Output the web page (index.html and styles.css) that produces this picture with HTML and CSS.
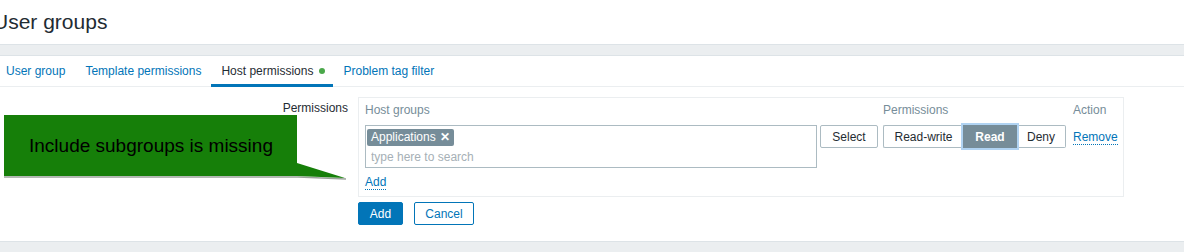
FILE: index.html
```html
<!DOCTYPE html>
<html lang="en">
<head>
    <meta charset="UTF-8">
    <title>User groups</title>
    <link rel="stylesheet" href="styles.css">
</head>
<body>
    <header class="page-header">
        <h1 class="page-title">User groups</h1>
    </header>
    <div class="separator"></div>

    <main class="page">
        <ul class="tabs">
            <li class="tab"><a href="#">User group</a></li>
            <li class="tab"><a href="#">Template permissions</a></li>
            <li class="tab active"><a href="#">Host permissions</a><span class="status-dot"></span></li>
            <li class="tab"><a href="#">Problem tag filter</a></li>
        </ul>

        <div class="form-row">
            <label class="form-label">Permissions</label>
            <div class="form-box">
                <div class="perm-grid">
                    <div class="col-title">Host groups</div>
                    <div></div>
                    <div class="col-title">Permissions</div>
                    <div class="col-title">Action</div>

                    <div class="multiselect">
                        <div class="tag-list">
                            <span class="tag">Applications <span class="tag-x">&#x2715;</span></span>
                        </div>
                        <input class="ms-input" type="text" placeholder="type here to search">
                    </div>
                    <div><button class="btn-alt">Select</button></div>
                    <div class="radio-seg">
                        <span class="seg">Read-write</span>
                        <span class="seg selected">Read</span>
                        <span class="seg">Deny</span>
                    </div>
                    <div><a href="#" class="link-action remove">Remove</a></div>
                </div>
                <a href="#" class="link-action add-link">Add</a>
            </div>
        </div>

        <div class="form-buttons">
            <button class="btn-primary">Add</button>
            <button class="btn-outline">Cancel</button>
        </div>
    </main>
    <div class="footer-band"></div>

    <div class="callout">
        <svg width="344" height="66" viewBox="0 0 344 66">
            <path d="M0 62 H294 L342 64" fill="none" stroke="#9aa39a" stroke-width="1.5"/>
            <path d="M0 0 H293 V48 L341 63 L293 61 H0 Z" fill="#167f09"/>
            <text x="25" y="37" font-family="Liberation Sans, Arial, sans-serif" font-size="19" fill="#000">Include subgroups is missing</text>
        </svg>
    </div>
</body>
</html>
```

FILE: styles.css
```css
* {
    box-sizing: border-box;
}

body {
    margin: 0;
    font-family: "Liberation Sans", Arial, sans-serif;
    font-size: 12px;
    line-height: 14px;
    color: #1f2c33;
    background-color: #fff;
    overflow: hidden;
}

.page-header {
    height: 44px;
    padding-top: 10px;
}

.page-title {
    margin: 0 0 0 -7px;
    font-size: 21px;
    line-height: 24px;
    font-weight: normal;
    color: #1f2c33;
}

.separator {
    height: 12px;
    background-color: #ebeef0;
    border-top: 1px solid #dde3e7;
    border-bottom: 1px solid #dde3e7;
}

.page {
    margin-left: -4px;
}

.tabs {
    display: flex;
    list-style: none;
    margin: 0;
    padding: 0;
    border-bottom: 1px solid #ebeef0;
}

.tab {
    display: flex;
    align-items: center;
    padding: 8px 10px 6px;
    border-bottom: 3px solid transparent;
    margin-bottom: -1px;
}

.tab a {
    color: #0275b8;
    text-decoration: none;
}

.tab.active {
    border-bottom-color: #0275b8;
    padding-right: 8px;
}

.tab.active a {
    color: #1f2c33;
}

.status-dot {
    width: 6px;
    height: 6px;
    border-radius: 50%;
    background-color: #4aa84a;
    margin-left: 6px;
}

.form-row {
    display: flex;
    gap: 10px;
    margin-top: 10px;
}

.form-label {
    width: 352px;
    text-align: right;
    padding-top: 4px;
}

.form-box {
    width: 766px;
    border: 1px solid #ebeef0;
    padding: 5px 6px 6px;
}

.perm-grid {
    display: grid;
    grid-template-columns: 455px 63px 190px auto;
    row-gap: 8px;
}

.col-title {
    color: #768d99;
}

.multiselect {
    width: 452px;
    height: 43px;
    border: 1px solid #acbbc2;
    padding: 3px 1px 0;
}

.tag-list {
    display: flex;
}

.tag {
    display: inline-block;
    height: 17px;
    line-height: 17px;
    padding: 0 4px;
    background-color: #768d99;
    color: #fff;
    border-radius: 2px;
}

.tag-x {
    font-size: 12px;
    font-weight: bold;
    margin-left: 1px;
}

.ms-input {
    display: block;
    width: 100%;
    height: 21px;
    border: none;
    outline: none;
    padding: 0 4px;
    font-family: inherit;
    font-size: 12px;
    color: #1f2c33;
}

.ms-input::placeholder {
    color: #a6b0b6;
}

.btn-alt {
    height: 23px;
    width: 58px;
    background: #fff;
    border: 1px solid #acbbc2;
    border-radius: 2px;
    font-family: inherit;
    font-size: 12px;
    color: #1f2c33;
    padding: 0;
}

.radio-seg {
    display: flex;
    height: 23px;
    width: 183px;
}

.seg {
    display: flex;
    align-items: center;
    justify-content: center;
    border: 1px solid #acbbc2;
    background: #fff;
}

.seg:nth-child(1) {
    width: 80px;
    border-right: none;
    border-radius: 2px 0 0 2px;
}

.seg:nth-child(2) {
    width: 54px;
}

.seg:nth-child(3) {
    width: 49px;
    border-left: none;
    border-radius: 0 2px 2px 0;
}

.seg.selected {
    background-color: #768d99;
    border-color: #768d99;
    color: #fff;
    font-weight: bold;
    box-shadow: 0 0 0 2px #b0d3f2;
    position: relative;
}

.link-action {
    color: #0275b8;
    text-decoration: none;
    border-bottom: 1px dotted #0275b8;
}

.remove {
    display: inline-block;
    margin-top: 5px;
}

.add-link {
    display: inline-block;
    margin-top: 7px;
}

.form-buttons {
    display: flex;
    gap: 11px;
    margin: 5px 0 0 362px;
}

.btn-primary,
.btn-outline {
    height: 23px;
    border-radius: 2px;
    font-family: inherit;
    font-size: 12px;
    padding: 0;
}

.btn-primary {
    width: 45px;
    background-color: #0275b8;
    border: 1px solid #0275b8;
    color: #fff;
}

.btn-outline {
    width: 60px;
    background-color: #fff;
    border: 1px solid #0275b8;
    color: #0275b8;
}

.footer-band {
    margin-top: 16px;
    height: 20px;
    background-color: #ebeef0;
    border-top: 1px solid #dde3e7;
}

.callout {
    position: absolute;
    left: 4px;
    top: 115px;
    line-height: 0;
}
```
